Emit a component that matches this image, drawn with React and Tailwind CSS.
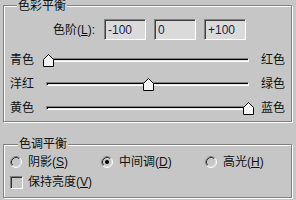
const BG = 'bg-[#c6c6c6]';

const SLIDERS = [
  { left: '青色', right: '红色', value: -100 },
  { left: '洋红', right: '绿色', value: 0 },
  { left: '黄色', right: '蓝色', value: 100 },
];

function Thumb({ value }) {
  const left = 1 + ((value + 100) / 200) * 200;
  return (
    <svg className="absolute top-[6px]" style={{ left }} width="11" height="13" viewBox="0 0 11 13">
      <path d="M0.5 5.5 L5.5 0.5 L10.5 5.5 L10.5 12.5 L0.5 12.5 Z" fill="#f4f4f4" stroke="#000" strokeWidth="1" />
      <path d="M1.5 6 L5.5 2 L9.5 6" fill="none" stroke="#fff" strokeWidth="1" />
    </svg>
  );
}

function SliderRow({ left, right, value }) {
  return (
    <div className="flex items-center h-[24px] pl-[6px]">
      <div className="w-[32px]">{left}</div>
      <div className="relative w-[216px] h-[24px]">
        <div className="absolute top-[10px] left-[4px] w-[203px] h-[4px] border border-t-[#808080] border-l-[#808080] border-b-white border-r-white bg-[#e6e6e6] shadow-[inset_1px_1px_0_#000]" />
        <Thumb value={value} />
      </div>
      <div className="pl-[3px]">{right}</div>
    </div>
  );
}

function Radio({ checked }) {
  return (
    <svg width="12" height="12" viewBox="0 0 12 12" className="shrink-0">
      <path d="M2.11 9.89 A5.5 5.5 0 0 1 9.89 2.11" fill="none" stroke="#808080" />
      <path d="M9.89 2.11 A5.5 5.5 0 0 1 2.11 9.89" fill="none" stroke="#fff" />
      <path d="M2.82 9.18 A4.5 4.5 0 0 1 9.18 2.82" fill="none" stroke="#303030" />
      <path d="M9.18 2.82 A4.5 4.5 0 0 1 2.82 9.18" fill="none" stroke="#dedede" />
      {checked && <circle cx="6" cy="6" r="2" fill="#000" />}
    </svg>
  );
}

export default function App() {
  return (
    <div className={`w-[296px] h-[200px] ${BG} overflow-hidden text-[12px] leading-none text-[#111] font-['Liberation_Sans','Noto_Sans_CJK_SC',sans-serif]`}>
      <div className="pt-[5px] pl-[3px]">
        <div className="relative w-[289px] h-[117px] border border-[#808080] shadow-[inset_1px_1px_0_#fff,1px_1px_0_#fff]">
          <div className={`absolute -top-[6px] left-[13px] px-[1px] ${BG} leading-[13px]`}>色彩平衡</div>

          <div className="flex items-center h-[21px] mt-[13px]">
            <div className="w-[100px] text-right pr-[9px]">色阶(<u>L</u>):</div>
            <div className="flex gap-[8px]">
              {['-100', '0', '+100'].map(v => (
                <div key={v} className="w-[42px] h-[21px] flex items-center pl-[3px] text-[#1c1c4c] bg-[#dadada] border border-t-[#808080] border-l-[#808080] border-b-white border-r-white shadow-[inset_1px_1px_0_#404040]">{v}</div>
              ))}
            </div>
          </div>

          <div className="mt-[8px]">
            {SLIDERS.map(s => <SliderRow key={s.left} {...s} />)}
          </div>
        </div>

        <div className="relative mt-[22px] w-[289px] h-[54px] border border-[#808080] shadow-[inset_1px_1px_0_#fff,1px_1px_0_#fff]">
          <div className={`absolute -top-[7px] left-[14px] px-[1px] ${BG} leading-[13px]`}>色调平衡</div>

          <div className="flex items-center h-[16px] mt-[9px] pl-[6px]">
            <div className="flex items-center gap-[6px] w-[91px]"><Radio /><span>阴影(<u>S</u>)</span></div>
            <div className="flex items-center gap-[6px] w-[104px]"><Radio checked /><span>中间调(<u>D</u>)</span></div>
            <div className="flex items-center gap-[6px]"><Radio /><span>高光(<u>H</u>)</span></div>
          </div>

          <div className="flex items-center h-[16px] mt-[4px] pl-[6px] gap-[5px]">
            <div className="w-[13px] h-[13px] border border-t-[#808080] border-l-[#808080] border-b-white border-r-white shadow-[inset_1px_1px_0_#303030]" />
            <span>保持亮度(<u>V</u>)</span>
          </div>
        </div>
      </div>
    </div>
  );
}
